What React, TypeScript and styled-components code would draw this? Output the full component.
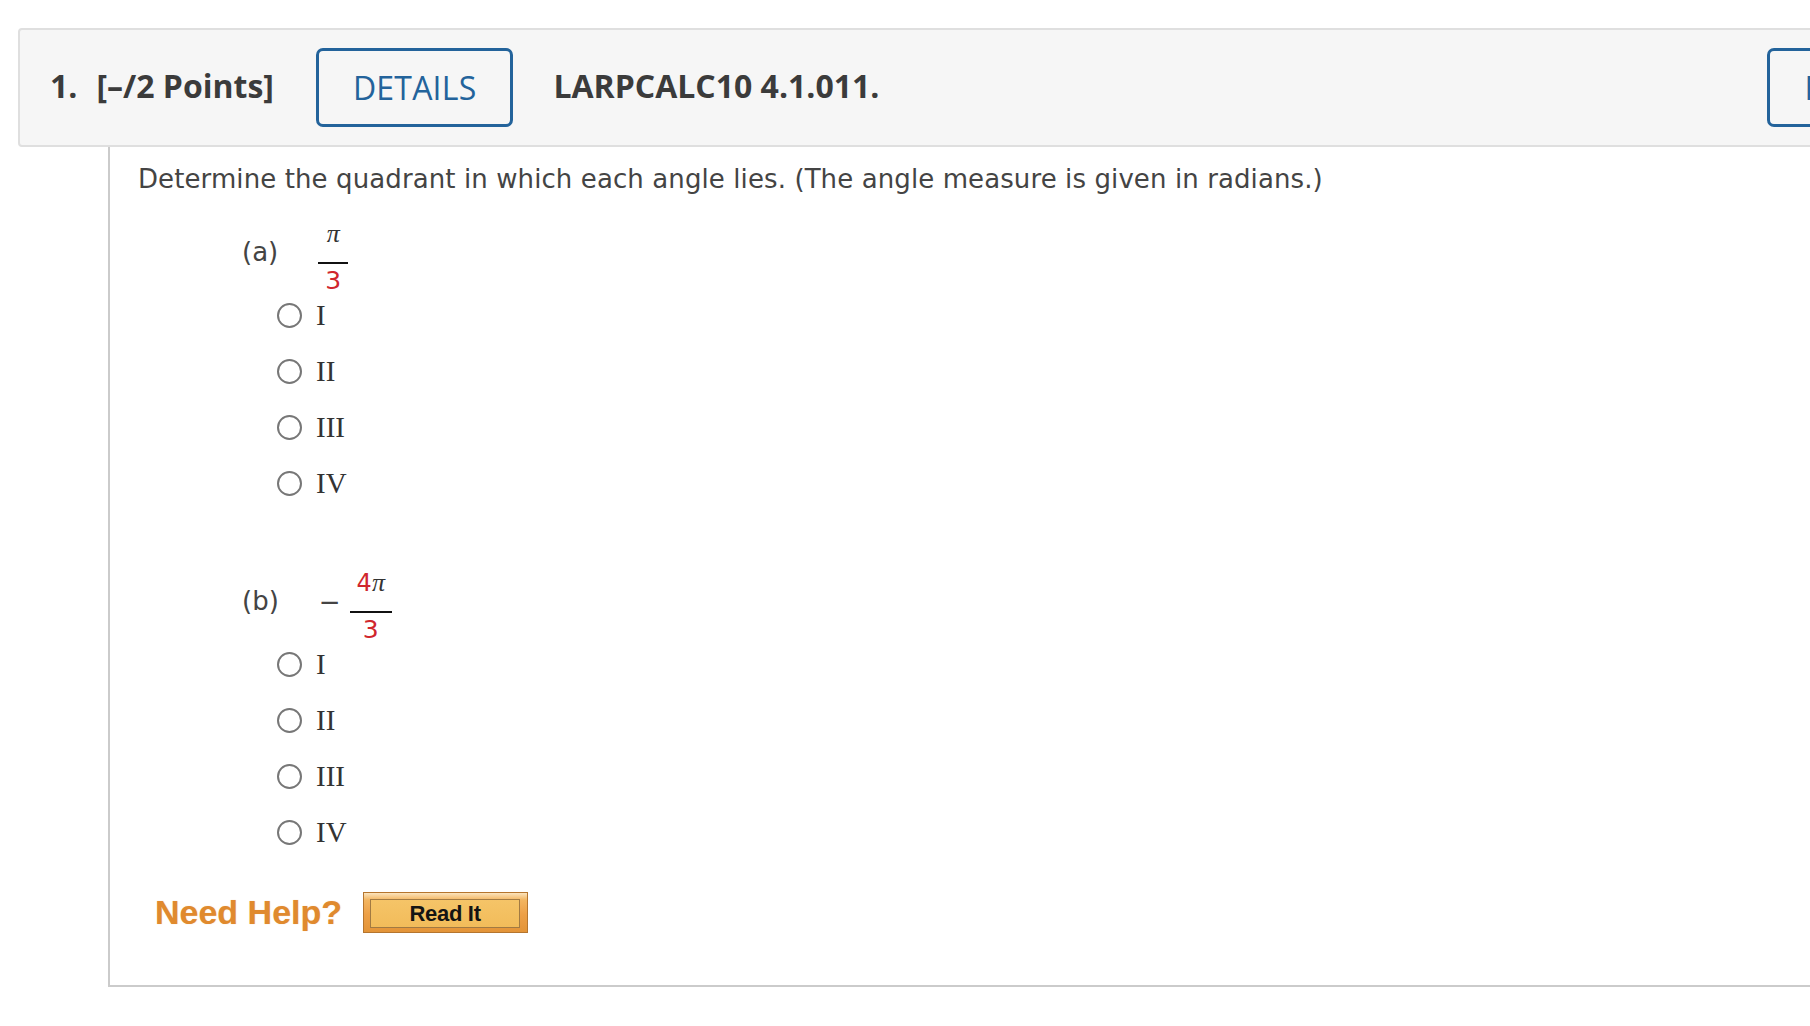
import React from "react";
import styled, { createGlobalStyle } from "styled-components";

const GlobalStyle = createGlobalStyle`
  html, body {
    margin: 0;
    padding: 0;
    background: #ffffff;
    overflow: hidden;
  }
  body {
    font-family: "DejaVu Sans", Verdana, sans-serif;
  }
`;

const Page = styled.div`
  width: 100%;
  overflow: hidden;
  box-sizing: border-box;
  padding: 28px 0 0 18px;
`;

const Question = styled.section`
  width: 2010px;
`;

const Header = styled.header`
  display: flex;
  align-items: center;
  height: 115px;
  padding: 0 26px 0 30px;
  background: #f6f6f6;
  border: 2px solid #dfdfdf;
  border-radius: 4px;
  font-family: "Open Sans", "Liberation Sans", sans-serif;
  font-size: 32px;
  color: #3b3b3b;
`;

const HeaderText = styled.span<{ $after: number }>`
  font-weight: 700;
  white-space: nowrap;
  padding-bottom: 4px;
  margin-right: ${(p) => p.$after}px;
`;

const OutlineButton = styled.button<{ $after?: number; $push?: boolean }>`
  box-sizing: border-box;
  height: 79px;
  padding: 0 34px;
  border: 3px solid #23639b;
  border-radius: 7px;
  background: transparent;
  color: #23639b;
  font-family: "Open Sans", "Liberation Sans", sans-serif;
  font-size: 32px;
  font-weight: 400;
  letter-spacing: 0.2px;
  white-space: nowrap;
  flex-shrink: 0;
  margin-right: ${(p) => p.$after ?? 0}px;
  margin-left: ${(p) => (p.$push ? "auto" : "0")};
`;

const Panel = styled.div`
  margin-left: 90px;
  border: 2px solid #cbcbcb;
  border-top: none;
  padding: 14px 0 52px 28px;
`;

const Instruction = styled.p`
  margin: 0;
  font-size: 26px;
  line-height: 36px;
  letter-spacing: 0.1px;
  color: #444444;
  white-space: nowrap;
`;

const Part = styled.div<{ $gap: number }>`
  margin: ${(p) => p.$gap}px 0 0 104px;
`;

const PartHead = styled.div`
  display: flex;
  align-items: flex-start;
`;

const PartLabel = styled.span`
  font-size: 26px;
  line-height: 36px;
  color: #444444;
  margin-top: 15px;
  margin-right: 40px;
`;

const Minus = styled.span`
  font-size: 26px;
  line-height: 36px;
  color: #444444;
  margin-top: 16px;
  margin-right: 9px;
`;

const Fraction = styled.span`
  display: flex;
  flex-direction: column;
  align-items: center;
`;

const Num = styled.span`
  font-family: "Liberation Serif", "Times New Roman", serif;
  font-size: 26px;
  line-height: 30px;
  color: #333333;
  padding: 0 7px;
  margin-bottom: 13px;
  white-space: nowrap;
`;

const Pi = styled.span`
  font-style: italic;
`;

const Digit = styled.span`
  font-family: "DejaVu Sans", Verdana, sans-serif;
  font-size: 24px;
  color: #d0262d;
`;

const Bar = styled.span`
  align-self: stretch;
  height: 2px;
  background: #111111;
`;

const Den = styled.span`
  font-family: "DejaVu Sans", Verdana, sans-serif;
  font-size: 25px;
  line-height: 28px;
  color: #d0262d;
  padding: 0 7px;
  margin-top: 3px;
`;

const Options = styled.ul`
  list-style: none;
  margin: 0 0 0 35px;
  padding: 0;
  display: flex;
  flex-direction: column;
  gap: 16px;
`;

const Option = styled.label`
  display: flex;
  align-items: center;
  gap: 14px;
  height: 40px;
  font-family: "Liberation Serif", "Times New Roman", serif;
  font-size: 29px;
  color: #333333;
`;

const Radio = styled.input`
  appearance: none;
  -webkit-appearance: none;
  box-sizing: border-box;
  width: 25px;
  height: 25px;
  margin: 0;
  border: 2px solid #777777;
  border-radius: 50%;
  background: #ffffff;
  flex-shrink: 0;
`;

const HelpRow = styled.div`
  display: flex;
  align-items: center;
  margin: 40px 0 0 17px;
`;

const NeedHelp = styled.span`
  font-family: "Liberation Sans", Arial, sans-serif;
  font-weight: 700;
  font-size: 34px;
  line-height: 41px;
  color: #e08a2e;
  margin-right: 21px;
  text-shadow: 0 0 1px rgba(224, 138, 46, 0.45);
`;

const ReadIt = styled.button`
  box-sizing: border-box;
  display: flex;
  width: 165px;
  height: 41px;
  padding: 6px 7px 4px 6px;
  border: 1px solid #b5752e;
  background: linear-gradient(
    to bottom,
    #fbe4bd 0%,
    #f3b560 18%,
    #eda047 55%,
    #e39438 100%
  );
  cursor: pointer;
`;

const ReadItFace = styled.span`
  flex: 1;
  display: flex;
  align-items: center;
  justify-content: center;
  border: 1px solid #a27a42;
  background: linear-gradient(to bottom, #f5c468 0%, #f2bc5a 100%);
  font-family: "Liberation Sans", Arial, sans-serif;
  font-weight: 700;
  font-size: 22px;
  letter-spacing: -0.3px;
  color: #141414;
`;

type PartData = {
  label: string;
  negative: boolean;
  coefficient?: string;
  denominator: string;
  gap: number;
};

const parts: PartData[] = [
  { label: "(a)", negative: false, denominator: "3", gap: 22 },
  { label: "(b)", negative: true, coefficient: "4", denominator: "3", gap: 65 },
];

const choices = ["I", "II", "III", "IV"];

export default function App() {
  return (
    <>
      <GlobalStyle />
      <Page>
        <Question>
          <Header>
            <HeaderText $after={19}>1.</HeaderText>
            <HeaderText $after={42}>[–/2 Points]</HeaderText>
            <OutlineButton $after={40}>DETAILS</OutlineButton>
            <HeaderText $after={0}>LARPCALC10 4.1.011.</HeaderText>
            <OutlineButton $push>MY NOTES</OutlineButton>
          </Header>
          <Panel>
            <Instruction>
              Determine the quadrant in which each angle lies. (The angle measure is given in radians.)
            </Instruction>
            {parts.map((part) => (
              <Part key={part.label} $gap={part.gap}>
                <PartHead>
                  <PartLabel>{part.label}</PartLabel>
                  {part.negative && <Minus>−</Minus>}
                  <Fraction>
                    <Num>
                      {part.coefficient && <Digit>{part.coefficient}</Digit>}
                      <Pi>π</Pi>
                    </Num>
                    <Bar />
                    <Den>{part.denominator}</Den>
                  </Fraction>
                </PartHead>
                <Options>
                  {choices.map((c) => (
                    <li key={c}>
                      <Option>
                        <Radio type="radio" name={`part-${part.label}`} />
                        {c}
                      </Option>
                    </li>
                  ))}
                </Options>
              </Part>
            ))}
            <HelpRow>
              <NeedHelp>Need Help?</NeedHelp>
              <ReadIt type="button">
                <ReadItFace>Read It</ReadItFace>
              </ReadIt>
            </HelpRow>
          </Panel>
        </Question>
      </Page>
    </>
  );
}
